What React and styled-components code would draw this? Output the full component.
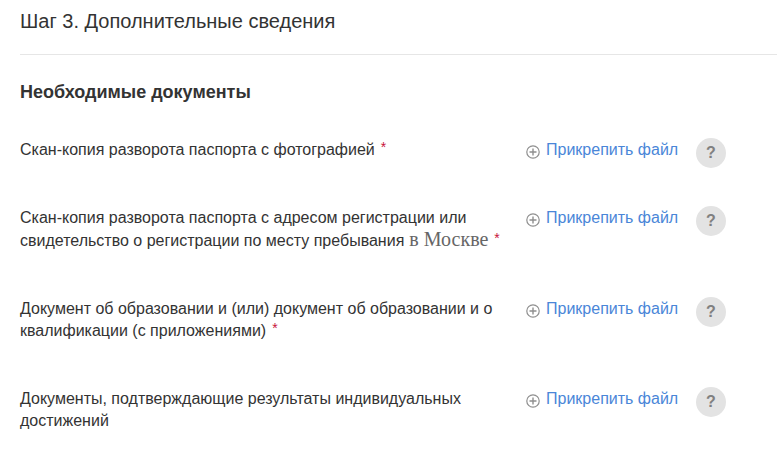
import React from 'react'
import styled, { createGlobalStyle } from 'styled-components'

const GlobalStyle = createGlobalStyle`
  html, body {
    margin: 0;
    padding: 0;
    background: #fff;
    overflow: hidden;
  }
  body {
    font-family: "Liberation Sans", Arial, sans-serif;
    color: #333;
  }
`

const docs = [
  { id: 1, text: 'Скан-копия разворота паспорта с фотографией', required: true },
  {
    id: 2,
    text: 'Скан-копия разворота паспорта с адресом регистрации или свидетельство о регистрации по месту пребывания',
    city: 'в Москве',
    required: true,
  },
  {
    id: 3,
    text: 'Документ об образовании и (или) документ об образовании и о квалификации (с приложениями)',
    required: true,
  },
  { id: 4, text: 'Документы, подтверждающие результаты индивидуальных достижений' },
]

function PlusIcon() {
  return (
    <svg width="14" height="14" viewBox="0 0 14 14" fill="none">
      <circle cx="7" cy="7" r="6.2" stroke="#8f8f8f" strokeWidth="1.2" />
      <path d="M7 3.5v7M3.5 7h7" stroke="#8f8f8f" strokeWidth="1.4" />
    </svg>
  )
}

function App() {
  return (
    <Page>
      <GlobalStyle />
      <Title>Шаг 3. Дополнительные сведения</Title>
      <Content>
        <Heading>Необходимые документы</Heading>
        {docs.map((doc) => (
          <Row key={doc.id}>
            <Label>
              {doc.text}
              {doc.city && <City> {doc.city}</City>}
              {doc.required && <Star>*</Star>}
            </Label>
            <Attach href="#">
              <PlusIcon />
              <span>Прикрепить файл</span>
            </Attach>
            <Help>?</Help>
          </Row>
        ))}
      </Content>
    </Page>
  )
}

export default App

const Page = styled.div`
  width: 777px;
  height: 457px;
  overflow: hidden;
`

const Title = styled.h1`
  margin: 0 0 0 20px;
  padding-top: 9px;
  box-sizing: border-box;
  border-bottom: 1px solid #e6e6e6;
  height: 55px;
  font-size: 20px;
  line-height: 24px;
  font-weight: 400;
  color: #333;
`

const Content = styled.div`
  padding: 27px 0 0 20px;
`

const Heading = styled.h2`
  margin: 0 0 37px;
  font-size: 18px;
  line-height: 20px;
  font-weight: 700;
  color: #333;
`

const Row = styled.div`
  display: flex;
  align-items: flex-start;
  padding-bottom: 46px;
`

const Label = styled.div`
  width: 491px;
  margin-right: 15px;
  font-size: 16px;
  line-height: 22px;
  color: #333;
`

const City = styled.span`
  font-family: "Liberation Serif", "Times New Roman", serif;
  font-size: 20px;
  line-height: 1;
  color: #666;
`

const Star = styled.span`
  margin-left: 6px;
  color: #c8143c;
  font-size: 14px;
  line-height: 1;
  position: relative;
  top: -3px;
`

const Attach = styled.a`
  display: flex;
  align-items: center;
  gap: 6px;
  width: 170px;
  height: 22px;
  font-size: 16px;
  color: #4a86d8;
  text-decoration: none;
  svg {
    margin-top: 4px;
  }
`

const Help = styled.div`
  width: 30px;
  height: 30px;
  margin: -1px 0 -8px;
  border-radius: 50%;
  background: #e3e3e3;
  color: #808080;
  font-size: 16px;
  font-weight: 700;
  display: flex;
  align-items: center;
  justify-content: center;
`
